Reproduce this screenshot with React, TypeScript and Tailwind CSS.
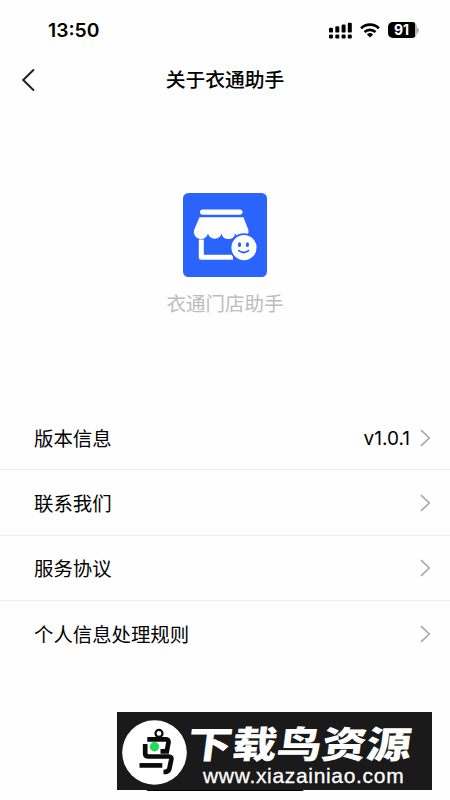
import React from 'react';

const rows = [
  { label: '版本信息', value: 'v1.0.1' },
  { label: '联系我们' },
  { label: '服务协议' },
  { label: '个人信息处理规则' },
];

const StatusBar: React.FC = () => (
  <div className="flex h-[60px] items-center justify-between pl-[48px] pr-[31px]">
    <span className="pt-[2px] font-['Inter'] text-[19.3px] font-semibold leading-none">13:50</span>
    <div className="flex items-center">
      <svg width="24" height="17" viewBox="0 0 24 17" fill="#000">
        <rect x="0" y="5.8" width="4" height="4.8" rx="1.2" />
        <rect x="6.3" y="4.3" width="4" height="6.3" rx="1.2" />
        <rect x="12.6" y="2.5" width="4" height="8.1" rx="1.2" />
        <rect x="18.8" y="0.8" width="4" height="9.8" rx="1.2" />
        <rect x="0" y="12.6" width="4" height="3.8" rx="1.2" />
        <rect x="6.3" y="12.6" width="4" height="3.8" rx="1.2" />
        <rect x="12.6" y="12.6" width="4" height="3.8" rx="1.2" />
        <rect x="18.8" y="12.6" width="4" height="3.8" rx="1.2" />
      </svg>
      <svg className="ml-[7px]" width="20" height="15" viewBox="0 0 20 15" fill="none" stroke="#000" strokeWidth="2.7">
        <path d="M1.1 5.3a12.8 12.8 0 0 1 17.8 0" />
        <path d="M4.5 9a8 8 0 0 1 11 0" />
        <path d="M10 14.6 6.9 11.5a4.6 4.6 0 0 1 6.2 0Z" fill="#000" stroke="none" />
      </svg>
      <div className="ml-2 flex h-4 w-[29px] overflow-hidden rounded-[5px] bg-[#b5b5b5]">
        <div className="flex w-[27px] items-center justify-center bg-black font-['Inter'] text-[14px] font-bold leading-none text-white">91</div>
      </div>
      <div className="h-[5px] w-[2px] rounded-r-full bg-[#b5b5b5]" />
    </div>
  </div>
);

const AppLogo: React.FC = () => (
  <svg width="84" height="84" viewBox="0 0 84 84">
    <rect width="84" height="84" rx="5.5" fill="#2b63fd" />
    <rect x="17" y="16.5" width="42.5" height="5.2" rx="2.6" fill="#fff" />
    {/* Awning */}
    <path
      d="M16.5 24.3H60.5L65.5 37.2A6.9 6.9 0 0 1 52.2 40.5A7 7 0 0 1 38.5 40.5A7 7 0 0 1 25 40.5A6.9 6.9 0 0 1 11 37.2Z"
      fill="#fff"
    />
    <path d="M18.3 46.5V64.2H50" fill="none" stroke="#fff" strokeWidth="5" strokeLinejoin="round" />
    <circle cx="61" cy="54.6" r="14.3" fill="#2b63fd" />
    <circle cx="61" cy="54.6" r="12.6" fill="#fff" />
    <rect x="55" y="49.3" width="3" height="4.8" rx="1.5" fill="#2b63fd" />
    <rect x="62.9" y="49.3" width="3" height="4.8" rx="1.5" fill="#2b63fd" />
    <path d="M55.8 57.6q5 3.8 9.8 0" fill="none" stroke="#2b63fd" strokeWidth="1.8" strokeLinecap="round" />
  </svg>
);

const Watermark: React.FC = () => (
  <div className="absolute left-[117px] top-[712px] flex h-[78px] w-[315px] bg-[#1a1a1a]">
    <svg className="ml-[5px] mt-[8px] shrink-0" width="65" height="65" viewBox="0 0 65 65" fill="none">
      <circle cx="32.5" cy="32.5" r="32.3" fill="#fff" />
      <g stroke="#0b0b0b" strokeWidth="4.7">
        <circle cx="37" cy="13.4" r="3.5" strokeWidth="2.2" />
        <path d="M25.3 19.3H43.5Q47 19.3 46.5 22.3L44.8 31.3H38.5" />
        <path d="M23.2 24V33.3Q23.2 36.5 26.4 36.5H46.7Q49.8 36.5 49.3 39.5L47.3 49Q46.4 52 41.5 52" />
        <path d="M17.5 45.4H40.3" />
      </g>
      <circle cx="32.5" cy="26.8" r="4.7" fill="#23d95a" />
    </svg>
    <div className="flex flex-col whitespace-nowrap text-white">
      <span className="ml-px mt-[10px] h-[40px] origin-left -skew-x-6 scale-x-[1.21] font-['Noto_Sans_CJK_SC',sans-serif] text-[37px] font-black leading-[40px]">
        下载鸟资源
      </span>
      <span className="ml-[16px] mt-[3px] font-['Liberation_Sans',sans-serif] text-[21px] leading-[22px] tracking-[0.68px] [-webkit-text-stroke:0.3px_white]">
        www.xiazainiao.com
      </span>
    </div>
  </div>
);

export default function App() {
  return (
    <div className="relative h-[800px] w-[450px] overflow-hidden bg-[#fefefe] font-['Noto_Sans_CJK_SC',sans-serif] text-black">
      <StatusBar />

      <header className="grid h-10 grid-cols-[60px_1fr_60px] items-center">
        <svg className="ml-[21px]" width="15" height="24" viewBox="0 0 15 24" fill="none" stroke="#222" strokeWidth="2" strokeLinecap="round">
          <path d="M12.4 2 2.2 12l10.2 10" />
        </svg>
        <h1 className="pb-[2px] text-center text-[19.8px] font-medium leading-[38px]">关于衣通助手</h1>
      </header>

      <section className="flex h-[305.2px] flex-col items-center pt-[93.4px]">
        <AppLogo />
        <p className="mt-[11px] text-[19.5px] leading-[30px] text-[#bdbdbd]">衣通门店助手</p>
      </section>

      <ul>
        {rows.map((row) => (
          <li
            key={row.label}
            className="flex h-[65.2px] items-center border-b border-[#eeeeee] pl-[34px] pr-[19px] text-[19.4px] last:border-b-0"
          >
            <span className="flex-1">{row.label}</span>
            {row.value && <span className="mr-[10px] pt-[3px] font-['Inter'] text-[19px]">{row.value}</span>}
            <svg className="mt-px" width="11" height="18" viewBox="0 0 11 18" fill="none" stroke="#a8a8a8" strokeWidth="1.6">
              <path d="M1 1.2 9.3 9 1 16.8" />
            </svg>
          </li>
        ))}
      </ul>

      {/* Home indicator */}
      <div className="absolute left-[146px] top-[786px] h-[5px] w-[158px] rounded-full bg-black" />
      <Watermark />
    </div>
  );
}
